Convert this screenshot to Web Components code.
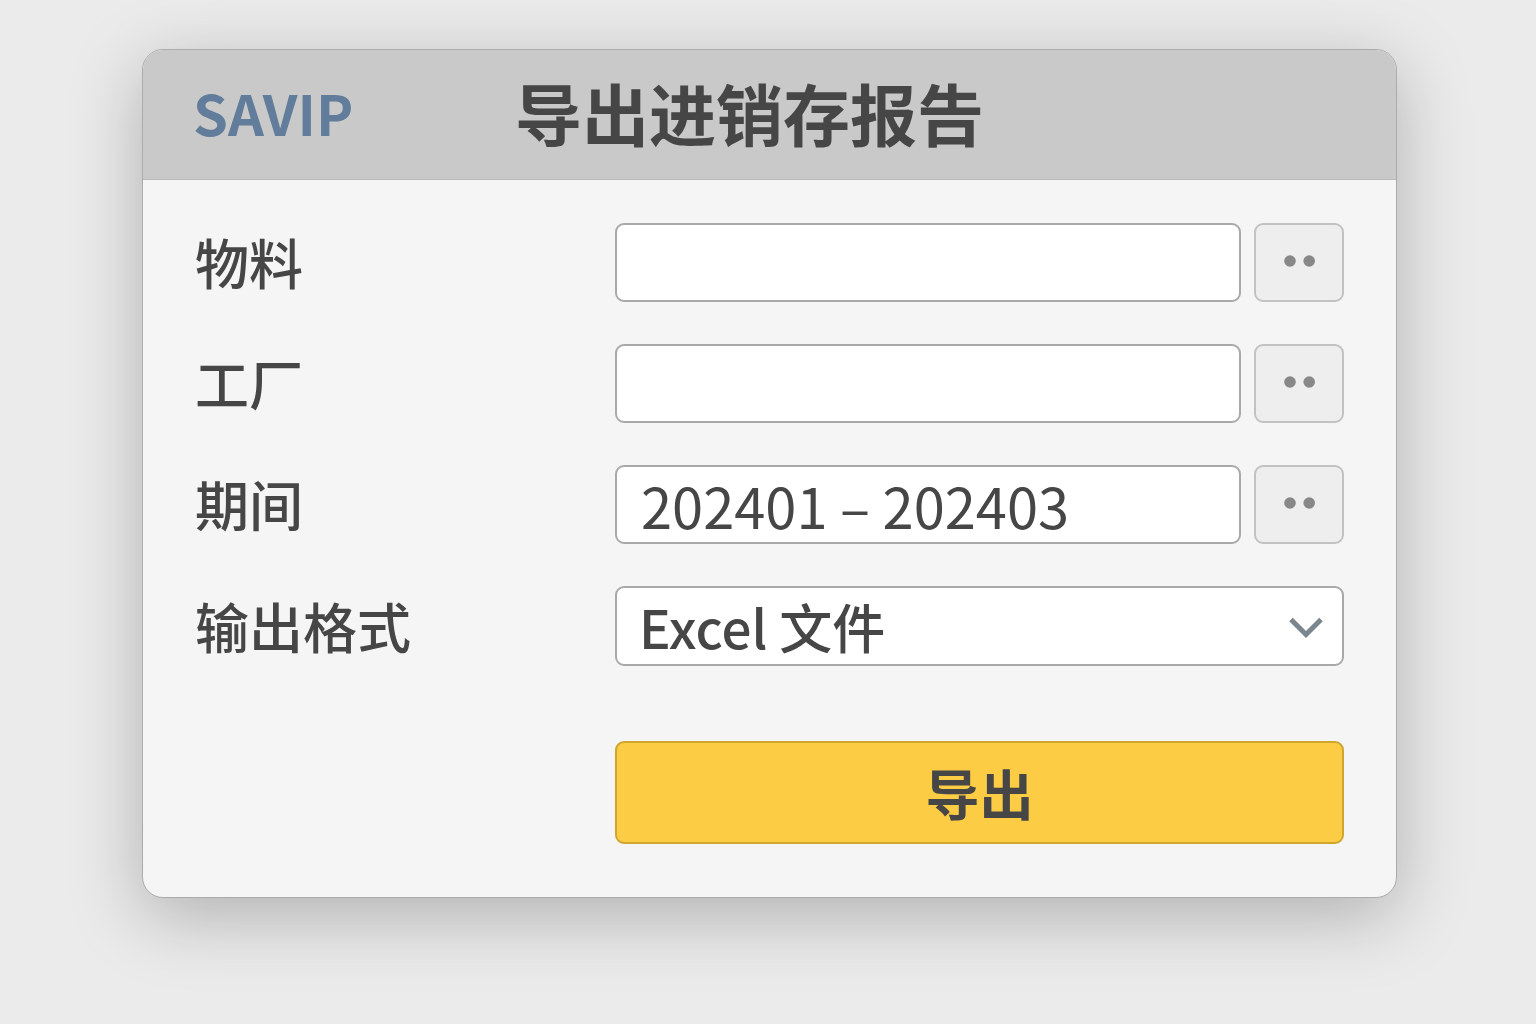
<!DOCTYPE html>
<html lang="zh-CN">
<head>
    <meta charset="UTF-8">
    <meta name="viewport" content="width=device-width, initial-scale=1">
    <title>导出进销存报告</title>
    <style>
        body {
            min-height: 100vh;
            margin: 0;
            padding: 49px 139px 64px 142px;
            box-sizing: border-box;
            background: #ebebeb;
            color: #464646;
            font-family: "Noto Sans CJK SC", sans-serif;
        }
    </style>
</head>
<body>
    <report-dialog>
        <brand-logo slot="logo">SAVIP</brand-logo>
        <span slot="title">导出进销存报告</span>

        <lookup-field name="material">物料</lookup-field>
        <lookup-field name="plant">工厂</lookup-field>
        <lookup-field name="period" value="202401 – 202403">期间</lookup-field>
        <select-field name="format" options="Excel 文件">输出格式</select-field>

        <export-button slot="actions">导出</export-button>
    </report-dialog>

    <script>
        // Estilos compartidos por las filas del formulario
        const fieldStyles = `
            :host {
                display: grid;
                grid-template-columns: 420px minmax(0, 1fr);
                align-items: center;
            }

            label {
                padding-bottom: 2px;
                font-size: 54px;
                font-weight: 500;
                line-height: 77px;
                white-space: nowrap;
            }

            input, select {
                width: 100%;
                height: 79px;
                margin: 0;
                box-sizing: border-box;
                border: 2px solid #a9a9a9;
                border-radius: 9px;
                background: #ffffff;
                color: inherit;
                font-family: inherit;
            }
        `;

        /**
         * Componente Web: logotipo
         */
        class BrandLogo extends HTMLElement {
            constructor() {
                super();
                this.attachShadow({ mode: 'open' });
            }

            connectedCallback() {
                this.shadowRoot.innerHTML = `
                    <style>
                        :host {
                            display: block;
                            color: #627c9b;
                            font-size: 56px;
                            font-weight: 700;
                            line-height: 80px;
                        }
                    </style>
                    <slot></slot>
                `;
            }
        }

        /**
         * Componente Web: diálogo con encabezado, campos y acciones
         */
        class ReportDialog extends HTMLElement {
            constructor() {
                super();
                this.attachShadow({ mode: 'open' });
            }

            connectedCallback() {
                this.shadowRoot.innerHTML = `
                    <style>
                        :host {
                            display: block;
                            border: 1px solid #ababab;
                            border-radius: 21px;
                            background: #f5f5f5;
                            box-shadow: 0 18px 72px rgba(0, 0, 0, 0.25);
                            overflow: hidden;
                        }

                        header {
                            display: grid;
                            grid-template-columns: 322px minmax(0, 1fr);
                            align-items: center;
                            height: 130px;
                            padding: 0 50px 6px;
                            box-sizing: border-box;
                            border-bottom: 1px solid #bababa;
                            background: #c9c9c9;
                        }

                        h1 {
                            margin: 0;
                            font-size: 67px;
                            font-weight: 700;
                            line-height: 96px;
                            white-space: nowrap;
                        }

                        form {
                            padding: 43px 52px 53px;
                        }

                        .fields {
                            display: grid;
                            gap: 42px;
                        }

                        .actions {
                            margin: 75px 0 0 420px;
                        }
                    </style>

                    <header>
                        <slot name="logo"></slot>
                        <h1><slot name="title"></slot></h1>
                    </header>
                    <form>
                        <div class="fields"><slot></slot></div>
                        <div class="actions"><slot name="actions"></slot></div>
                    </form>
                `;
            }
        }

        /**
         * Componente Web: campo de texto con botón de búsqueda
         */
        class LookupField extends HTMLElement {
            constructor() {
                super();
                this.attachShadow({ mode: 'open' });
            }

            connectedCallback() {
                const name = this.getAttribute('name') || '';
                const value = this.getAttribute('value') || '';

                this.shadowRoot.innerHTML = `
                    <style>
                        ${fieldStyles}

                        .control {
                            display: flex;
                            gap: 13px;
                        }

                        input {
                            flex: 1;
                            min-width: 0;
                            padding: 0 24px;
                            font-size: 56px;
                            font-weight: 400;
                        }

                        button {
                            display: flex;
                            align-items: center;
                            justify-content: center;
                            width: 90px;
                            height: 79px;
                            padding: 0 0 4px;
                            box-sizing: border-box;
                            border: 2px solid #c2c2c2;
                            border-radius: 9px;
                            background: #eeeeee;
                        }
                    </style>

                    <label for="field"><slot></slot></label>
                    <div class="control">
                        <input id="field" type="text" name="${name}" value="${value}">
                        <button type="button" aria-label="${this.textContent}">
                            <svg width="32" height="12" viewBox="0 0 32 12" fill="#888888">
                                <circle cx="7" cy="6" r="5.8"/>
                                <circle cx="26.2" cy="6" r="5.8"/>
                            </svg>
                        </button>
                    </div>
                `;
            }
        }

        /**
         * Componente Web: lista desplegable
         */
        class SelectField extends HTMLElement {
            constructor() {
                super();
                this.attachShadow({ mode: 'open' });
            }

            connectedCallback() {
                const name = this.getAttribute('name') || '';
                const options = (this.getAttribute('options') || '').split(',');

                this.shadowRoot.innerHTML = `
                    <style>
                        ${fieldStyles}

                        .control {
                            position: relative;
                        }

                        select {
                            display: block;
                            appearance: none;
                            height: 80px;
                            padding: 0 22px;
                            font-size: 53px;
                            font-weight: 500;
                        }

                        svg {
                            position: absolute;
                            top: 31px;
                            right: 21px;
                            pointer-events: none;
                        }
                    </style>

                    <label for="field"><slot></slot></label>
                    <div class="control">
                        <select id="field" name="${name}">
                            ${options.map(o => `<option>${o}</option>`).join('')}
                        </select>
                        <svg width="34" height="22" viewBox="0 0 34 22" fill="none" stroke="#7c868e" stroke-width="5">
                            <path d="M2 2.5 17 17.5 32 2.5"/>
                        </svg>
                    </div>
                `;
            }
        }

        /**
         * Componente Web: botón principal
         */
        class ExportButton extends HTMLElement {
            constructor() {
                super();
                this.attachShadow({ mode: 'open' });
            }

            connectedCallback() {
                this.shadowRoot.innerHTML = `
                    <style>
                        :host {
                            display: block;
                        }

                        button {
                            display: block;
                            width: 100%;
                            height: 103px;
                            padding: 0;
                            border: 2px solid #cfa62f;
                            border-radius: 9px;
                            background: #fccc44;
                            color: inherit;
                            font-family: inherit;
                            font-size: 54px;
                            font-weight: 700;
                            line-height: 77px;
                        }
                    </style>
                    <button type="button"><slot></slot></button>
                `;
            }
        }

        // Registrar los componentes
        customElements.define('brand-logo', BrandLogo);
        customElements.define('report-dialog', ReportDialog);
        customElements.define('lookup-field', LookupField);
        customElements.define('select-field', SelectField);
        customElements.define('export-button', ExportButton);
    </script>
</body>
</html>
